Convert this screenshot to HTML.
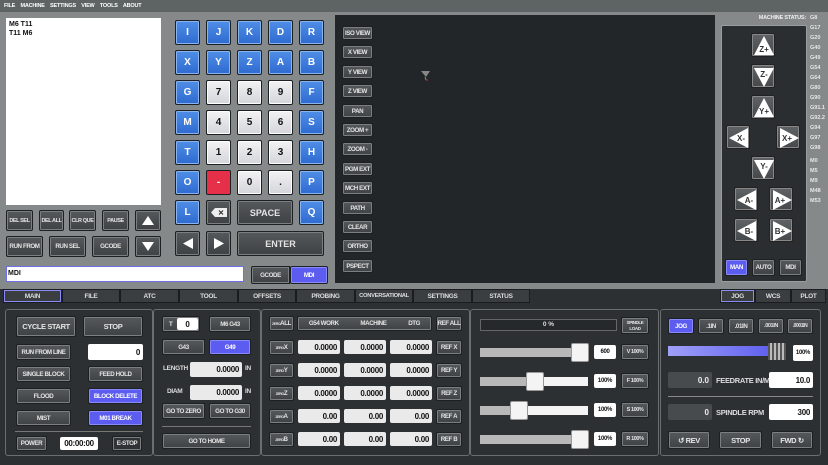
<!DOCTYPE html>
<html><head><meta charset="utf-8"><style>
*{box-sizing:border-box;margin:0;padding:0}
body{width:828px;height:465px;overflow:hidden;background:#2c3032;font-family:"Liberation Sans Narrow","Liberation Sans",sans-serif;font-weight:bold;position:relative}
.a{position:absolute}
.menu{left:0;top:0;width:828px;height:12px;background:#5e6364;color:#fff;font-size:5.5px;line-height:12px;padding-left:4px;word-spacing:4px;letter-spacing:-.2px}
.top{left:0;top:12px;width:828px;height:274px;background:#858989}
.b{position:absolute;display:flex;align-items:center;justify-content:center;color:#e4e4e4;font-size:6.2px;background:linear-gradient(#55595b,#3e4244);border:1px solid #1d2022;box-shadow:inset 0 0 0 1px #7b7f80;border-radius:2px;white-space:nowrap;letter-spacing:-.4px;overflow:hidden}
.k{font-size:10px;border-radius:2px;letter-spacing:0}
.bl{background:linear-gradient(#4f8ee6,#2f6ad0);box-shadow:inset 0 0 0 1px #8ab4f0;color:#fff}
.w{background:linear-gradient(#f2f2f4,#d4d5da);box-shadow:inset 0 0 0 1px #fff;color:#111}
.r{background:#e6304a;box-shadow:none;color:#fff}
.pu{background:#5c5cf0;box-shadow:inset 0 0 0 1px #8a8af8;color:#fff}
.in{position:absolute;background:#fff;color:#111;font-size:8px;display:flex;align-items:center;justify-content:flex-end;padding-right:3px;border-radius:2px;letter-spacing:-.3px}
.fl{background:#eaeaea}
.dk{position:absolute;background:#474b4d;color:#eee;font-size:8px;display:flex;align-items:center;justify-content:flex-end;padding-right:3px;border-radius:2px}
.pan{position:absolute;border:1px solid #6a6e70;border-radius:3px;top:309px;height:147px}
.lab{position:absolute;color:#ddd;font-size:6.5px;letter-spacing:-.3px}
.trk{position:absolute;height:9px;background:linear-gradient(90deg,#b8b8b8 0,#b8b8b8 var(--p),#f4f4f4 var(--p));}
.knob{position:absolute;width:18px;height:19px;background:#f4f4f4;border:1px solid #999;border-radius:2px}
.tab{position:absolute;top:289px;height:14px;background:#3a3e40;border:1px solid #1a1d1f;color:#ddd;font-size:6.5px;letter-spacing:-.3px;display:flex;align-items:center;justify-content:center}
.st{position:absolute;color:#e8e8e8;font-size:5.5px;left:810px}
.jg{position:absolute;width:24px;height:24px;background:linear-gradient(#5f6365,#45494b);border:1px solid #222;border-radius:2px;box-shadow:inset 0 0 0 1px #888}
.jg svg{position:absolute;left:1px;top:1px}
</style></head><body>
<div class="a menu">FILE MACHINE SETTINGS VIEW TOOLS ABOUT</div>
<div class="a top"></div>
<div class="a" style="left:6px;top:18px;width:155px;height:187px;background:#fff;font-size:7px;color:#111;padding:2px 3px;line-height:9px">M6 T11<br>T11 M6</div>

<div class="b k bl" style="left:175px;top:20px;width:25px;height:25px">I</div>
<div class="b k bl" style="left:206px;top:20px;width:25px;height:25px">J</div>
<div class="b k bl" style="left:237px;top:20px;width:25px;height:25px">K</div>
<div class="b k bl" style="left:268px;top:20px;width:25px;height:25px">D</div>
<div class="b k bl" style="left:299px;top:20px;width:25px;height:25px">R</div>
<div class="b k bl" style="left:175px;top:50px;width:25px;height:25px">X</div>
<div class="b k bl" style="left:206px;top:50px;width:25px;height:25px">Y</div>
<div class="b k bl" style="left:237px;top:50px;width:25px;height:25px">Z</div>
<div class="b k bl" style="left:268px;top:50px;width:25px;height:25px">A</div>
<div class="b k bl" style="left:299px;top:50px;width:25px;height:25px">B</div>
<div class="b k bl" style="left:175px;top:80px;width:25px;height:25px">G</div>
<div class="b k w" style="left:206px;top:80px;width:25px;height:25px">7</div>
<div class="b k w" style="left:237px;top:80px;width:25px;height:25px">8</div>
<div class="b k w" style="left:268px;top:80px;width:25px;height:25px">9</div>
<div class="b k bl" style="left:299px;top:80px;width:25px;height:25px">F</div>
<div class="b k bl" style="left:175px;top:110px;width:25px;height:25px">M</div>
<div class="b k w" style="left:206px;top:110px;width:25px;height:25px">4</div>
<div class="b k w" style="left:237px;top:110px;width:25px;height:25px">5</div>
<div class="b k w" style="left:268px;top:110px;width:25px;height:25px">6</div>
<div class="b k bl" style="left:299px;top:110px;width:25px;height:25px">S</div>
<div class="b k bl" style="left:175px;top:140px;width:25px;height:25px">T</div>
<div class="b k w" style="left:206px;top:140px;width:25px;height:25px">1</div>
<div class="b k w" style="left:237px;top:140px;width:25px;height:25px">2</div>
<div class="b k w" style="left:268px;top:140px;width:25px;height:25px">3</div>
<div class="b k bl" style="left:299px;top:140px;width:25px;height:25px">H</div>
<div class="b k bl" style="left:175px;top:170px;width:25px;height:25px">O</div>
<div class="b k r" style="left:206px;top:170px;width:25px;height:25px">-</div>
<div class="b k w" style="left:237px;top:170px;width:25px;height:25px">0</div>
<div class="b k w" style="left:268px;top:170px;width:25px;height:25px">.</div>
<div class="b k bl" style="left:299px;top:170px;width:25px;height:25px">P</div>
<div class="b k bl" style="left:175px;top:200px;width:25px;height:25px">L</div>
<div class="b k" style="left:206px;top:200px;width:25px;height:25px"><svg width="16" height="9"><path d="M4 0H16V9H4L0 4.5Z" fill="#eee"/><path d="M8 2.5l4 4M12 2.5l-4 4" stroke="#333" stroke-width="1.2"/></svg></div>
<div class="b k" style="left:237px;top:200px;width:56px;height:25px;font-size:9px">SPACE</div>
<div class="b k bl" style="left:299px;top:200px;width:25px;height:25px">Q</div>
<div class="b k" style="left:175px;top:231px;width:25px;height:25px"><svg width="10" height="11"><path d="M10 0V11L0 5.5Z" fill="#fff"/></svg></div>
<div class="b k" style="left:206px;top:231px;width:25px;height:25px"><svg width="10" height="11"><path d="M0 0V11L10 5.5Z" fill="#fff"/></svg></div>
<div class="b k" style="left:237px;top:231px;width:87px;height:25px;font-size:9px">ENTER</div>

<div class="b" style="left:6px;top:210px;width:27px;height:21px;font-size:5.5px">DEL SEL</div>
<div class="b" style="left:39px;top:210px;width:25px;height:21px;font-size:5.5px">DEL ALL</div>
<div class="b" style="left:69px;top:210px;width:27px;height:21px;font-size:5.5px">CLR QUE</div>
<div class="b" style="left:102px;top:210px;width:27px;height:21px;font-size:5.5px">PAUSE</div>
<div class="b" style="left:135px;top:210px;width:26px;height:21px"><svg width="12" height="9"><path d="M0 9H12L6 0Z" fill="#fff"/></svg></div>
<div class="b" style="left:6px;top:236px;width:37px;height:21px">RUN FROM</div>
<div class="b" style="left:49px;top:236px;width:37px;height:21px">RUN SEL</div>
<div class="b" style="left:92px;top:236px;width:37px;height:21px">GCODE</div>
<div class="b" style="left:135px;top:236px;width:26px;height:21px"><svg width="12" height="9"><path d="M0 0H12L6 9Z" fill="#fff"/></svg></div>
<div class="a" style="left:6px;top:266px;width:238px;height:16px;background:#fff;border:1px solid #6f6fe8;font-size:7px;padding:3px 1px;color:#111">MDI</div>
<div class="b" style="left:251px;top:266px;width:39px;height:18px;border-radius:2px 0 0 2px">GCODE</div>
<div class="b pu" style="left:290px;top:266px;width:38px;height:18px">MDI</div>

<div class="a" style="left:335px;top:15px;width:380px;height:268px;background:#222628"></div>
<svg class="a" style="left:421px;top:71px" width="10" height="10"><path d="M0 0H9L5 6Z" fill="#888"/><path d="M4 6L5 9" stroke="#6a6" /><path d="M5 9L7 9" stroke="#c33"/></svg>
<div class="b" style="left:342px;top:26px;width:31px;height:14px">ISO VIEW</div>
<div class="b" style="left:342px;top:45px;width:31px;height:14px">X VIEW</div>
<div class="b" style="left:342px;top:65px;width:31px;height:14px">Y VIEW</div>
<div class="b" style="left:342px;top:84px;width:31px;height:14px">Z VIEW</div>
<div class="b" style="left:342px;top:104px;width:31px;height:14px">PAN</div>
<div class="b" style="left:342px;top:123px;width:31px;height:14px">ZOOM +</div>
<div class="b" style="left:342px;top:142px;width:31px;height:14px">ZOOM -</div>
<div class="b" style="left:342px;top:162px;width:31px;height:14px">PGM EXT</div>
<div class="b" style="left:342px;top:181px;width:31px;height:14px">MCH EXT</div>
<div class="b" style="left:342px;top:201px;width:31px;height:14px">PATH</div>
<div class="b" style="left:342px;top:220px;width:31px;height:14px">CLEAR</div>
<div class="b" style="left:342px;top:239px;width:31px;height:14px">ORTHO</div>
<div class="b" style="left:342px;top:259px;width:31px;height:14px">PSPECT</div>

<div class="a" style="left:721px;top:25px;width:86px;height:257px;background:#2a2e30;border:1px solid #9a9e9e;border-radius:2px"></div>
<div class="a" style="right:22px;top:15px;font-size:5.5px;color:#eee;letter-spacing:-.2px">MACHINE STATUS:</div>
<div class="st" style="top:15px">G8</div><div class="st" style="top:25px">G17</div><div class="st" style="top:35px">G20</div><div class="st" style="top:45px">G40</div><div class="st" style="top:55px">G49</div><div class="st" style="top:65px">G54</div><div class="st" style="top:75px">G64</div><div class="st" style="top:85px">G80</div><div class="st" style="top:95px">G90</div><div class="st" style="top:105px">G91.1</div><div class="st" style="top:115px">G92.2</div><div class="st" style="top:125px">G94</div><div class="st" style="top:135px">G97</div><div class="st" style="top:145px">G98</div><div class="st" style="top:158px">M0</div><div class="st" style="top:168px">M5</div><div class="st" style="top:178px">M9</div><div class="st" style="top:188px">M48</div><div class="st" style="top:198px">M53</div>

<div class="jg" style="left:751px;top:33px"><svg width="22" height="22"><path d="M11 1L21 20H1Z" fill="#fff"/><text x="11" y="17" font-size="8" text-anchor="middle" fill="#333" font-family="Liberation Sans" font-weight="bold">Z+</text></svg></div>
<div class="jg" style="left:751px;top:64px"><svg width="22" height="22"><path d="M1 2H21L11 21Z" fill="#fff"/><text x="11" y="11" font-size="8" text-anchor="middle" fill="#333" font-family="Liberation Sans" font-weight="bold">Z-</text></svg></div>
<div class="jg" style="left:751px;top:95px"><svg width="22" height="22"><path d="M11 1L21 20H1Z" fill="#fff"/><text x="11" y="17" font-size="8" text-anchor="middle" fill="#333" font-family="Liberation Sans" font-weight="bold">Y+</text></svg></div>
<div class="jg" style="left:726px;top:125px"><svg width="22" height="22"><path d="M1 11L20 1V21Z" fill="#fff"/><text x="13" y="14" font-size="8" text-anchor="middle" fill="#333" font-family="Liberation Sans" font-weight="bold">X-</text></svg></div>
<div class="jg" style="left:776px;top:125px"><svg width="22" height="22"><path d="M21 11L2 1V21Z" fill="#fff"/><text x="9" y="14" font-size="8" text-anchor="middle" fill="#333" font-family="Liberation Sans" font-weight="bold">X+</text></svg></div>
<div class="jg" style="left:751px;top:156px"><svg width="22" height="22"><path d="M1 2H21L11 21Z" fill="#fff"/><text x="11" y="11" font-size="8" text-anchor="middle" fill="#333" font-family="Liberation Sans" font-weight="bold">Y-</text></svg></div>
<div class="jg" style="left:734px;top:187px"><svg width="22" height="22"><path d="M1 11L20 1V21Z" fill="#fff"/><text x="13" y="14" font-size="8" text-anchor="middle" fill="#333" font-family="Liberation Sans" font-weight="bold">A-</text></svg></div>
<div class="jg" style="left:769px;top:187px"><svg width="22" height="22"><path d="M21 11L2 1V21Z" fill="#fff"/><text x="9" y="14" font-size="8" text-anchor="middle" fill="#333" font-family="Liberation Sans" font-weight="bold">A+</text></svg></div>
<div class="jg" style="left:734px;top:218px"><svg width="22" height="22"><path d="M1 11L20 1V21Z" fill="#fff"/><text x="13" y="14" font-size="8" text-anchor="middle" fill="#333" font-family="Liberation Sans" font-weight="bold">B-</text></svg></div>
<div class="jg" style="left:769px;top:218px"><svg width="22" height="22"><path d="M21 11L2 1V21Z" fill="#fff"/><text x="9" y="14" font-size="8" text-anchor="middle" fill="#333" font-family="Liberation Sans" font-weight="bold">B+</text></svg></div>
<div class="b pu" style="left:725px;top:259px;width:23px;height:17px">MAN</div>
<div class="b" style="left:752px;top:259px;width:23px;height:17px">AUTO</div>
<div class="b" style="left:779px;top:259px;width:23px;height:17px">MDI</div>

<div class="a" style="left:0;top:286px;width:828px;height:3px;background:#858989"></div>
<div class="tab pu" style="left:3px;width:59px">MAIN</div>
<div class="tab" style="left:62px;width:58px">FILE</div>
<div class="tab" style="left:120px;width:59px">ATC</div>
<div class="tab" style="left:179px;width:59px">TOOL</div>
<div class="tab" style="left:238px;width:58px">OFFSETS</div>
<div class="tab" style="left:296px;width:59px">PROBING</div>
<div class="tab" style="left:355px;width:58px;font-size:5.8px">CONVERSATIONAL</div>
<div class="tab" style="left:413px;width:59px">SETTINGS</div>
<div class="tab" style="left:472px;width:58px">STATUS</div>
<div class="tab pu" style="left:720px;width:35px">JOG</div>
<div class="tab" style="left:755px;width:36px">WCS</div>
<div class="tab" style="left:791px;width:35px">PLOT</div>

<div class="pan" style="left:5px;width:148px"></div>
<div class="b" style="left:16px;top:316px;width:60px;height:21px;font-size:7.5px">CYCLE START</div>
<div class="b" style="left:83px;top:316px;width:60px;height:21px;font-size:7.5px">STOP</div>
<div class="b" style="left:16px;top:344px;width:55px;height:16px">RUN FROM LINE</div>
<div class="in" style="left:88px;top:344px;width:55px;height:16px">0</div>
<div class="b" style="left:16px;top:366px;width:55px;height:16px">SINGLE BLOCK</div>
<div class="b" style="left:88px;top:366px;width:55px;height:16px">FEED HOLD</div>
<div class="b" style="left:16px;top:388px;width:55px;height:16px">FLOOD</div>
<div class="b pu" style="left:88px;top:388px;width:55px;height:16px">BLOCK DELETE</div>
<div class="b" style="left:16px;top:410px;width:55px;height:16px">MIST</div>
<div class="b pu" style="left:88px;top:410px;width:55px;height:16px">M01 BREAK</div>
<div class="a" style="left:15px;top:431px;width:128px;height:1px;background:#777"></div>
<div class="b" style="left:16px;top:436px;width:31px;height:15px">POWER</div>
<div class="in" style="left:60px;top:437px;width:38px;height:13px;justify-content:center;padding:0">00:00:00</div>
<div class="b" style="left:112px;top:436px;width:30px;height:15px;background:#2f3335">E-STOP</div>

<div class="pan" style="left:153px;width:108px"></div>
<div class="b" style="left:162px;top:316px;width:38px;height:16px;justify-content:flex-start;padding-left:6px">T</div>
<div class="in" style="left:177px;top:318px;width:21px;height:12px;justify-content:center;padding:0">0</div>
<div class="b" style="left:209px;top:316px;width:42px;height:16px">M6 G43</div>
<div class="b" style="left:162px;top:339px;width:43px;height:16px">G43</div>
<div class="b pu" style="left:209px;top:339px;width:42px;height:16px">G49</div>
<div class="lab" style="left:163px;top:365px">LENGTH</div>
<div class="in fl" style="left:190px;top:362px;width:52px;height:15px">0.0000</div>
<div class="lab" style="left:245px;top:365px">IN</div>
<div class="lab" style="left:167px;top:388px">DIAM</div>
<div class="in fl" style="left:190px;top:385px;width:52px;height:15px">0.0000</div>
<div class="lab" style="left:245px;top:388px">IN</div>
<div class="b" style="left:162px;top:403px;width:43px;height:16px">GO TO ZERO</div>
<div class="b" style="left:209px;top:403px;width:42px;height:16px">GO TO G30</div>
<div class="a" style="left:162px;top:426px;width:89px;height:1px;background:#777"></div>
<div class="b" style="left:162px;top:433px;width:89px;height:16px">GO TO HOME</div>

<div class="pan" style="left:261px;width:209px"></div>
<div class="b" style="left:269px;top:316px;width:25px;height:15px"><span style="font-size:3.5px">ZERO</span>ALL</div>
<div class="b" style="left:297px;top:316px;width:135px;height:15px;justify-content:space-around">G54 WORK<span>MACHINE</span><span>DTG</span></div>
<div class="b" style="left:436px;top:316px;width:26px;height:15px">REF ALL</div>

<div class="b" style="left:269px;top:340px;width:25px;height:15px"><span style="font-size:3.5px">ZERO</span>X</div>
<div class="in fl" style="left:298px;top:340px;width:42px;height:14px">0.0000</div><div class="in fl" style="left:344px;top:340px;width:42px;height:14px">0.0000</div><div class="in fl" style="left:390px;top:340px;width:42px;height:14px">0.0000</div>
<div class="b" style="left:436px;top:340px;width:26px;height:15px">REF X</div>
<div class="b" style="left:269px;top:363px;width:25px;height:15px"><span style="font-size:3.5px">ZERO</span>Y</div>
<div class="in fl" style="left:298px;top:363px;width:42px;height:14px">0.0000</div><div class="in fl" style="left:344px;top:363px;width:42px;height:14px">0.0000</div><div class="in fl" style="left:390px;top:363px;width:42px;height:14px">0.0000</div>
<div class="b" style="left:436px;top:363px;width:26px;height:15px">REF Y</div>
<div class="b" style="left:269px;top:386px;width:25px;height:15px"><span style="font-size:3.5px">ZERO</span>Z</div>
<div class="in fl" style="left:298px;top:386px;width:42px;height:14px">0.0000</div><div class="in fl" style="left:344px;top:386px;width:42px;height:14px">0.0000</div><div class="in fl" style="left:390px;top:386px;width:42px;height:14px">0.0000</div>
<div class="b" style="left:436px;top:386px;width:26px;height:15px">REF Z</div>
<div class="b" style="left:269px;top:409px;width:25px;height:15px"><span style="font-size:3.5px">ZERO</span>A</div>
<div class="in fl" style="left:298px;top:409px;width:42px;height:14px">0.00</div><div class="in fl" style="left:344px;top:409px;width:42px;height:14px">0.00</div><div class="in fl" style="left:390px;top:409px;width:42px;height:14px">0.00</div>
<div class="b" style="left:436px;top:409px;width:26px;height:15px">REF A</div>
<div class="b" style="left:269px;top:432px;width:25px;height:15px"><span style="font-size:3.5px">ZERO</span>B</div>
<div class="in fl" style="left:298px;top:432px;width:42px;height:14px">0.00</div><div class="in fl" style="left:344px;top:432px;width:42px;height:14px">0.00</div><div class="in fl" style="left:390px;top:432px;width:42px;height:14px">0.00</div>
<div class="b" style="left:436px;top:432px;width:26px;height:15px">REF B</div>

<div class="pan" style="left:470px;width:189px"></div>
<div class="a" style="left:480px;top:319px;width:137px;height:12px;border:1px solid #666;background:#25292b;color:#ddd;font-size:6.5px;text-align:center;line-height:10px">0 %</div>
<div class="b" style="left:621px;top:317px;width:28px;height:17px;font-size:4.5px;line-height:6px;text-align:center">SPINDLE<br>LOAD</div>
<div class="trk" style="left:480px;top:348px;width:108px;--p:100%"></div><div class="knob" style="left:571px;top:343px"></div>
<div class="in" style="left:594px;top:345px;width:22px;height:14px;font-size:6px;justify-content:center;padding:0">600</div>
<div class="b" style="left:621px;top:344px;width:28px;height:16px;font-size:5.5px">V 100%</div>
<div class="trk" style="left:480px;top:377px;width:108px;--p:50%"></div><div class="knob" style="left:526px;top:372px"></div>
<div class="in" style="left:594px;top:374px;width:22px;height:14px;font-size:6px;justify-content:center;padding:0">100%</div>
<div class="b" style="left:621px;top:373px;width:28px;height:16px;font-size:5.5px">F 100%</div>
<div class="trk" style="left:480px;top:406px;width:108px;--p:35%"></div><div class="knob" style="left:510px;top:401px"></div>
<div class="in" style="left:594px;top:403px;width:22px;height:14px;font-size:6px;justify-content:center;padding:0">100%</div>
<div class="b" style="left:621px;top:402px;width:28px;height:16px;font-size:5.5px">S 100%</div>
<div class="trk" style="left:480px;top:435px;width:108px;--p:100%"></div><div class="knob" style="left:571px;top:430px"></div>
<div class="in" style="left:594px;top:432px;width:22px;height:14px;font-size:6px;justify-content:center;padding:0">100%</div>
<div class="b" style="left:621px;top:431px;width:28px;height:16px;font-size:5.5px">R 100%</div>

<div class="pan" style="left:660px;width:161px"></div>
<div class="b pu" style="left:668px;top:318px;width:26px;height:16px">JOG</div>
<div class="b" style="left:698px;top:318px;width:26px;height:16px">.1IN</div>
<div class="b" style="left:728px;top:318px;width:26px;height:16px">.01IN</div>
<div class="b" style="left:758px;top:318px;width:26px;height:16px;font-size:5.5px">.001IN</div>
<div class="b" style="left:787px;top:318px;width:26px;height:16px;font-size:5px">.0001IN</div>
<div class="a" style="left:668px;top:346px;width:102px;height:10px;background:linear-gradient(90deg,#a0a0f8,#6060f0)"></div>
<div class="a" style="left:768px;top:343px;width:18px;height:17px;background:repeating-linear-gradient(90deg,#555 0,#555 2px,#bbb 2px,#bbb 4px)"></div>
<div class="in" style="left:793px;top:345px;width:20px;height:16px;font-size:6px;justify-content:center;padding:0">100%</div>
<div class="dk" style="left:668px;top:372px;width:44px;height:16px">0.0</div>
<div class="lab" style="left:716px;top:376px;font-size:7.5px">FEEDRATE IN/M</div>
<div class="in" style="left:769px;top:372px;width:44px;height:16px">10.0</div>
<div class="a" style="left:668px;top:396px;width:145px;height:1px;background:#888"></div>
<div class="dk" style="left:668px;top:404px;width:44px;height:16px">0</div>
<div class="lab" style="left:716px;top:408px;font-size:7.5px">SPINDLE RPM</div>
<div class="in" style="left:769px;top:404px;width:44px;height:16px">300</div>
<div class="b" style="left:668px;top:431px;width:42px;height:18px;font-size:7.5px">↺ REV</div>
<div class="b" style="left:719px;top:431px;width:43px;height:18px;font-size:7.5px">STOP</div>
<div class="b" style="left:771px;top:431px;width:42px;height:18px;font-size:7.5px">FWD ↻</div>
</body></html>
